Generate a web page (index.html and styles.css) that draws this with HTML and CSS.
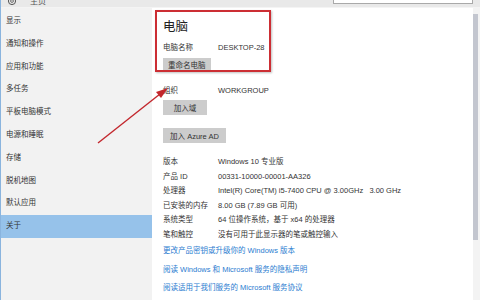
FILE: index.html
```html
<!DOCTYPE html>
<html lang="zh-CN">
<head>
  <meta charset="UTF-8" />
  <title>关于</title>
  <link rel="stylesheet" href="styles.css">
</head>
<body>

<div class="window">

  <div class="topbar">
    <div class="home">
      <svg class="gear" width="10" height="10" viewBox="0 0 10 10">
        <circle cx="5" cy="5" r="3.6" fill="none" stroke="#555" stroke-width="1"/>
        <circle cx="5" cy="5" r="1.4" fill="none" stroke="#555" stroke-width="0.8"/>
      </svg>
      <span>主页</span>
    </div>
    <div class="search"></div>
  </div>

  <div class="main">

    <ul class="nav">
      <li>显示</li>
      <li>通知和操作</li>
      <li>应用和功能</li>
      <li>多任务</li>
      <li>平板电脑模式</li>
      <li>电源和睡眠</li>
      <li>存储</li>
      <li>脱机地图</li>
      <li>默认应用</li>
      <li class="active">关于</li>
    </ul>

    <div class="content">
      <h2>电脑</h2>
      <div class="row first"><span class="label">电脑名称</span><span>DESKTOP-28</span></div>
      <div class="btn small">重命名电脑</div>

      <div class="row org"><span class="label">组织</span><span>WORKGROUP</span></div>
      <div class="btn">加入域</div>
      <div class="btn azure">加入 Azure AD</div>

      <div class="specs">
        <div class="row"><span class="label">版本</span><span>Windows 10 专业版</span></div>
        <div class="row"><span class="label">产品 ID</span><span>00331-10000-00001-AA326</span></div>
        <div class="row"><span class="label">处理器</span><span>Intel(R) Core(TM) i5-7400 CPU @ 3.00GHz&nbsp;&nbsp;&nbsp;3.00 GHz</span></div>
        <div class="row"><span class="label">已安装的内存</span><span>8.00 GB (7.89 GB 可用)</span></div>
        <div class="row"><span class="label">系统类型</span><span>64 位操作系统，基于 x64 的处理器</span></div>
        <div class="row"><span class="label">笔和触控</span><span>没有可用于此显示器的笔或触控输入</span></div>
      </div>

      <div class="links">
        <a>更改产品密钥或升级你的 Windows 版本</a>
        <a>阅读 Windows 和 Microsoft 服务的隐私声明</a>
        <a>阅读适用于我们服务的 Microsoft 服务协议</a>
      </div>
    </div>

    <div class="scrollbar"><div class="thumb"></div></div>

  </div>

  <!-- 标注：红框和箭头 -->
  <div class="mark-box"></div>
  <svg class="mark-arrow" width="480" height="300" viewBox="0 0 480 300">
    <line x1="98" y1="143" x2="160" y2="94" stroke="#c3272d" stroke-width="1.4"/>
    <polygon points="168,88 156,92 161,98" fill="#c3272d"/>
  </svg>

</div>

</body>
</html>
```

FILE: styles.css
```css
body {
  margin: 0;
  font-family: "Liberation Sans", "Noto Sans CJK SC", sans-serif;
  font-size: 7.5px;
  color: #333;
  background: #fff;
}

.window {
  width: 480px;
  height: 300px;
  overflow: hidden;
  display: flex;
  flex-direction: column;
  border-left: 1px solid #8ab4de;
  box-sizing: border-box;
}

.topbar {
  height: 8px;
  flex-shrink: 0;
  display: flex;
  justify-content: space-between;
  align-items: flex-end;
  overflow: hidden;
  background: #e9e9e9;
  border-bottom: 1px solid #f4f4f4;
  box-sizing: border-box;
  padding: 0 7px 0 6px;
}

.home {
  display: flex;
  align-items: center;
  gap: 13px;
  margin-bottom: 1px;
  color: #555;
  font-size: 8px;
}

.search {
  width: 140px;
  height: 12px;
  margin-bottom: 3px;
  background: #fff;
  border: 1px solid #a9a9a9;
  box-sizing: border-box;
}

.main {
  flex: 1;
  display: flex;
}

.nav {
  width: 151px;
  margin: 0;
  padding: 2px 0 0;
  list-style: none;
  background: #f2f2f2;
}

.nav li {
  height: 22.8px;
  line-height: 22.8px;
  padding-left: 5px;
  color: #333;
}

.nav li.active {
  background: #96c2ea;
}

.content {
  flex: 1;
  padding: 9px 0 0 11px;
}

.content h2 {
  margin: 0;
  font-size: 12.5px;
  font-weight: normal;
  line-height: 20px;
  color: #222;
}

.row {
  display: flex;
  line-height: 15px;
  white-space: nowrap;
}

.row.first {
  margin-top: 3px;
}

.row.org {
  margin-top: 13px;
}

.label {
  width: 55px;
  flex-shrink: 0;
}

.btn {
  display: inline-flex;
  align-items: center;
  justify-content: center;
  height: 15px;
  min-width: 44px;
  padding: 0 5px;
  margin-top: 2px;
  background: #cccccc;
  color: #333;
  font-size: 7.5px;
  box-sizing: border-box;
}

.btn.small {
  height: 12px;
  margin-top: 3px;
}

.btn.azure {
  display: flex;
  width: 63px;
  margin-top: 13px;
}

.specs {
  margin-top: 12px;
}

.specs .row {
  line-height: 14.5px;
}

.links {
  display: flex;
  flex-direction: column;
  gap: 4.5px;
  margin-top: 2px;
}

.links a {
  line-height: 14px;
  color: #2a7cd0;
}

.scrollbar {
  width: 7px;
  background: #f3f3f3;
  padding-top: 6px;
}

.thumb {
  width: 5px;
  height: 226px;
  background: #c3c6cf;
}

.mark-box {
  position: absolute;
  left: 155px;
  top: 10px;
  width: 116px;
  height: 62px;
  border: 2px solid #cc2e34;
  box-sizing: border-box;
  box-shadow: 1px 1px 2px rgba(0, 0, 0, 0.25);
}

.mark-arrow {
  position: absolute;
  left: 0;
  top: 0;
}
```
